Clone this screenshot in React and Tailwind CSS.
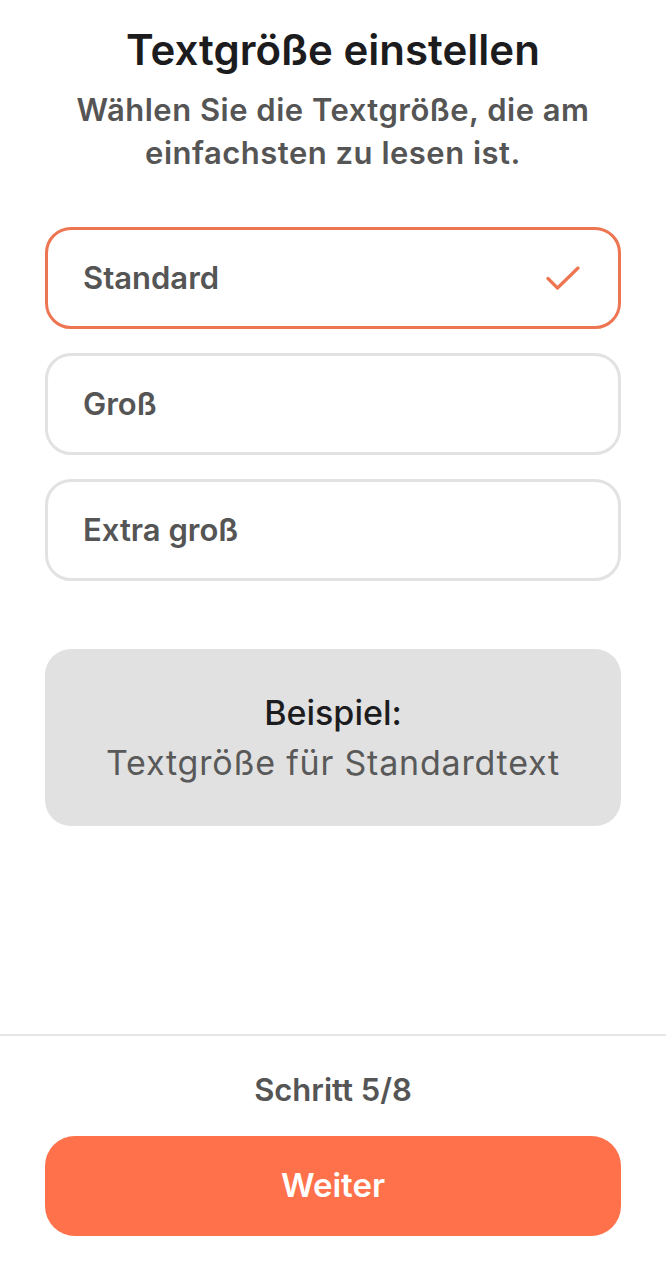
const options = [
  { id: "standard", label: "Standard", selected: true },
  { id: "gross", label: "Groß", selected: false },
  { id: "extra", label: "Extra groß", selected: false },
];

function Check() {
  return (
    <svg width="34" height="26" viewBox="0 0 34 26" fill="none">
      <path
        d="M2 13.5l9.5 9.5L32 3"
        stroke="#ee7552"
        strokeWidth="3.2"
        strokeLinecap="round"
        strokeLinejoin="round"
      />
    </svg>
  );
}

export default function App() {
  return (
    <div
      className="flex min-h-[1280px] w-full flex-col bg-white"
      style={{ fontFamily: "Inter, 'Noto Sans', sans-serif" }}
    >
      <div className="flex flex-1 flex-col px-[45px] pt-[26px]">
        <h1 className="text-center text-[42px] font-semibold leading-[48px] text-[#1c1c1e]">
          Textgröße einstellen
        </h1>
        <p className="mx-auto mt-[14px] max-w-[570px] text-center text-[31px] font-semibold leading-[43px] tracking-[0.5px] text-[#555555]">
          Wählen Sie die Textgröße, die am einfachsten zu lesen ist.
        </p>

        <div className="mt-[53px] flex flex-col gap-[24px]">
          {options.map((o) => (
            <div
              key={o.id}
              className={
                o.selected
                  ? "flex h-[102px] items-center justify-between rounded-[26px] border-[3px] border-[#ee7552] pl-[35px] pr-[38px]"
                  : "flex h-[102px] items-center justify-between rounded-[26px] border-[3px] border-[#e2e2e2] pl-[35px] pr-[38px]"
              }
            >
              <span className="text-[31px] font-semibold text-[#555555]">{o.label}</span>
              {o.selected && <Check />}
            </div>
          ))}
        </div>

        <div className="mt-[68px] flex h-[177px] flex-col items-center justify-center rounded-[26px] bg-[#e1e1e1]">
          <div className="text-[34px] font-medium leading-[50px] text-[#1c1c1e]">Beispiel:</div>
          <div className="text-[34px] font-normal leading-[50px] tracking-[0.8px] text-[#595959]">
            Textgröße für Standardtext
          </div>
        </div>
      </div>

      <div className="flex flex-col border-t-2 border-[#e6e6e6] px-[45px] pb-[44px] pt-[34px]">
        <div className="text-center text-[31px] font-semibold leading-[40px] text-[#555555]">
          Schritt 5/8
        </div>
        <button className="mt-[26px] flex h-[100px] items-center justify-center rounded-[30px] bg-[#ff714a] text-[33px] font-semibold text-white">
          Weiter
        </button>
      </div>
    </div>
  );
}
